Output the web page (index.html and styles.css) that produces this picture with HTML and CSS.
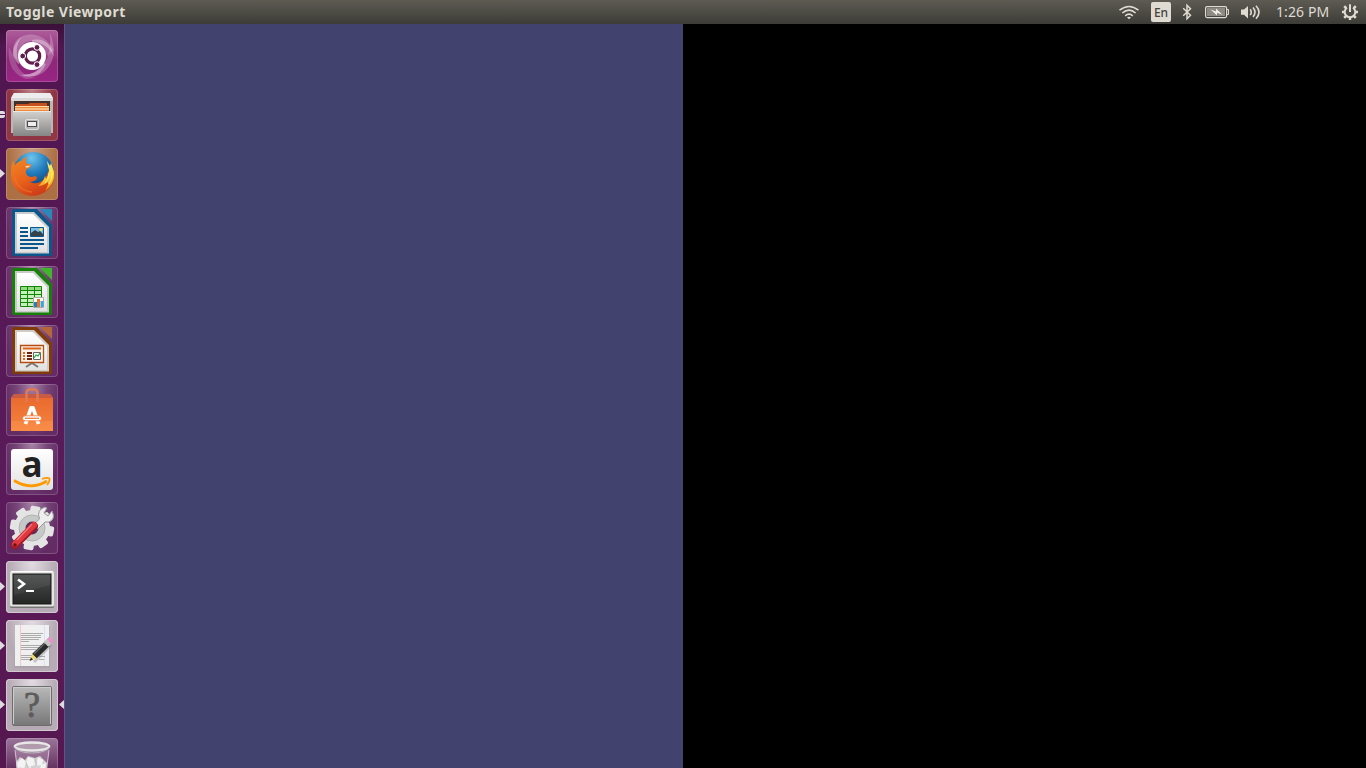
FILE: index.html
```html
<!DOCTYPE html>
<html lang="en">
<head>
<meta charset="utf-8">
<title>Toggle Viewport</title>
<link rel="stylesheet" href="styles.css">
</head>
<body>
<svg class="defs" width="0" height="0" aria-hidden="true">
  <defs>
    <linearGradient id="metal" x2="0" y2="1"><stop offset="0" stop-color="#d4d2d0"/><stop offset="1" stop-color="#858585"/></linearGradient>
    <linearGradient id="paper" x2="0" y2="1"><stop offset="0" stop-color="#fff"/><stop offset="1" stop-color="#e2e2e2"/></linearGradient>
    <linearGradient id="orange" x2="0" y2="1"><stop offset="0" stop-color="#e8672c"/><stop offset="1" stop-color="#f5853f"/></linearGradient>
    <radialGradient id="globe" cx=".45" cy=".15" r=".8"><stop offset="0" stop-color="#6cc5ee"/><stop offset=".5" stop-color="#1f78b8"/><stop offset="1" stop-color="#0c3a70"/></radialGradient>
    <linearGradient id="fox" x2=".5" y2="1"><stop offset="0" stop-color="#f28a22"/><stop offset=".6" stop-color="#e8621d"/><stop offset="1" stop-color="#cf3f17"/></linearGradient>
    <linearGradient id="tail" x2="0" y2="1"><stop offset="0" stop-color="#fff08a"/><stop offset=".5" stop-color="#ffd62e"/><stop offset="1" stop-color="#f08a1e"/></linearGradient>
    <linearGradient id="screen" x2="0" y2="1"><stop offset="0" stop-color="#4c4e4d"/><stop offset="1" stop-color="#252626"/></linearGradient>
    <linearGradient id="blank" x2="0" y2="1"><stop offset="0" stop-color="#b9b9b9"/><stop offset="1" stop-color="#777"/></linearGradient>
    <path id="arm" d="M26 10Q44 7 48 27Q42 13 26 12Z"/>
  </defs>
</svg>
<header class="panel">
  <span class="title">Toggle Viewport</span>
  <div class="indicators">
    <svg class="wifi" width="22" height="24" viewBox="0 0 22 24" fill="none" stroke="#dfdbd2"><path d="M1.500 10.200Q11 2.800 20.500 10.200" stroke-width="1.500"/><path d="M4.300 13Q11 7.400 17.700 13M7.200 15.800Q11 12.400 14.800 15.800" stroke-width="1.600"/><path d="M9 17.500Q11 15.900 13 17.500L11 19.300Z" fill="#dfdbd2" stroke="none"/></svg>
    <span class="lang">En</span>
    <svg class="bt" width="10" height="24" viewBox="0 0 10 24" fill="none" stroke="#dfdbd2" stroke-width="1.500"><path d="M1.200 8.200L8.500 15.200L5 18.700V5.300L8.500 8.800L1.200 15.800"/></svg>
    <svg class="bat" width="25" height="24" viewBox="0 0 25 24"><rect x=".6" y="6.600" width="21" height="11" rx="1.500" fill="none" stroke="#dfdbd2" stroke-width="1.200"/><rect x="2" y="8" width="18" height="8" fill="#8c8a82"/><path d="M22 9.500h1.500v5H22" fill="none" stroke="#dfdbd2"/><path d="M5.500 9.500L11 11.500L11 8.500L17.500 14.800L12 12.800L12 15.500Z" fill="#f2eee5"/></svg>
    <svg class="vol" width="21" height="24" viewBox="0 0 21 24"><path d="M1 9.500h3l4-3.500v12.500l-4-3.700H1Z" fill="#dfdbd2"/><path d="M10.200 9.300Q12.300 12.200 10.200 15.100M13 7.500Q17 12.200 13 17M16 5.800Q22 12.200 16 18.700" fill="none" stroke="#dfdbd2" stroke-width="1.600"/></svg>
    <span class="time">1:26 PM</span>
    <svg class="gear" width="18" height="24" viewBox="0 0 18 24" fill="none" stroke="#dfdbd2"><path d="M6 7.600A5.300 5.300 0 1 0 12 7.600" stroke-width="2"/><path d="M9 4.300V12" stroke-width="2"/><path d="M1 12h3M14 12h3M9 17v3M3.200 6.200l2 2M14.800 6.200l-2 2M3.200 17.800l2.300-2.300M14.800 17.800l-2.300-2.300" stroke-width="2.500"/></svg>
  </div>
</header>
<main class="desktop">
  <nav class="launcher">
    <div class="tile dash"><svg viewBox="0 0 52 52"><path d="M7 26Q5 9 20 5Q37 2 48 20L41 26Q37 11 26 11Q13 11 11 30Z" fill="#fff" opacity=".22"/><path d="M44 3Q54 28 38 42Q27 50 14 45Q30 46 38 34Q46 22 44 3Z" fill="#fff" opacity=".25"/><path d="M3 17Q0 42 20 49L30 48Q12 45 9 29Z" fill="#fff" opacity=".18"/><g fill="#fff" opacity=".35"><use href="#arm"/><use href="#arm" transform="rotate(120 26 26)"/><use href="#arm" transform="rotate(240 26 26)"/></g><circle cx="26" cy="26" r="14" fill="#fff"/><circle cx="26.500" cy="26" r="7.200" fill="none" stroke="#611d4d" stroke-width="3.200"/><g fill="#611d4d" stroke="#fff"><circle cx="16.700" cy="26" r="2.900"/><circle cx="31" cy="17.400" r="2.900"/><circle cx="31" cy="34.600" r="2.900"/></g></svg></div>
    <div class="tile files"><i class="pip double"></i><svg viewBox="0 0 52 52"><path d="M8 4H44L47 9V44H5V9Z" fill="#b9b8b7"/><path d="M8 4H44L47 9H5Z" fill="#ededed"/><path d="M5 9H47V12H5Z" fill="#d9d9d9"/><path d="M8 12H44V24H8Z" fill="#44302a"/><path d="M10 15H22L24 14H41V23H10Z" fill="#c74f20"/><path d="M9 17H43V23H9Z" fill="#ef8a3b"/><path d="M9 17.500H43" stroke="#ffe0a8" stroke-width="1"/><path d="M9 20H43" stroke="#fff1cf" stroke-width="1"/><path d="M7 22H45V47H7Z" fill="url(#metal)"/><path d="M7 22.500H45" stroke="#e8e8e8"/><rect x="19.500" y="30.500" width="13" height="10" rx="1.500" fill="#b5b5b5" stroke="#dedede"/><rect x="21.500" y="32.500" width="9" height="5" fill="#eee" stroke="#4c4c4c"/></svg></div>
    <div class="tile firefox"><i class="pip"></i><svg viewBox="0 0 52 52"><circle cx="27.500" cy="24" r="20" fill="url(#globe)"/><path d="M5 23Q5 17 7 13L9 17Q12 13 16 12.500Q17 9.500 21 9Q19 12 20 15Q22 16 25 16.500Q26 19 22 20.500Q19 22 20 25Q21 29 26 29L30 28L31 31Q28 34 24 34Q30 37 36 33Q40 30 42 24L47 21Q51 42 31 47.500Q15 50 8 38Q4 31 5 23Z" fill="url(#fox)"/><path d="M41 13L44 18L45 15L48 24Q49 36 39 43Q43 36 42 34Q37 38 32 38Q38 33 39 28L40 31Q43 27 43 22Q42 19 41 13Z" fill="url(#tail)"/><path d="M43 25Q43 31 39 35M46 25Q46 32 43 36" fill="none" stroke="#fff3a1" stroke-width=".8"/><path d="M19 18L25 17.500L21 20Z" fill="#f8d8aa"/><path d="M8 27Q10 42 26 44" fill="none" stroke="#f4782a" stroke-width="1.500" opacity=".6"/></svg></div>
    <div class="tile"><svg viewBox="0 0 52 52"><path d="M8 2H31L46 18V47Q46 49 44 49H8Q6 49 6 47V4Q6 2 8 2Z" fill="#0b568a"/><path d="M9 5H28L43 20V46.500H9Z" fill="#c7cbce"/><path d="M11 7H27L41 21V45H11Z" fill="url(#paper)"/><path d="M34 2H46V14Z" fill="#2988b8"/><path d="M14 21h8M14 25h8M14 29h8M14 33h24M14 37h24M14 41h18" stroke="#0b568a" stroke-width="2"/><path d="M24.500 20.500h13v9h-13Z" fill="#79bfe6" stroke="#0b568a"/><path d="M25 29V26L29 23L32 25L34 24L37 27V29Z" fill="#34434a"/><circle cx="35" cy="22.500" r="1.500" fill="#ffe15a"/></svg></div>
    <div class="tile"><svg viewBox="0 0 52 52"><path d="M8 2H31L46 18V47Q46 49 44 49H8Q6 49 6 47V4Q6 2 8 2Z" fill="#16800b"/><path d="M9 5H28L43 20V46.500H9Z" fill="#c7cbc5"/><path d="M11 7H27L41 21V45H11Z" fill="url(#paper)"/><path d="M34 2H46V14Z" fill="#3fb72b"/><path d="M14.500 20.500h21v20h-21Z" fill="#c6f0b9"/><path d="M15 21h20v3H15Z" fill="#91dd80"/><path d="M14.500 20.500h21v20h-21ZM14.500 24.500h21M14.500 28.500h21M14.500 32.500h21M14.500 36.500h21M21.500 20v20M28.500 20v20" fill="none" stroke="#148309"/><path d="M27.500 31.500h10v10h-10Z" fill="#fff" stroke="#aaa"/><path d="M28 36h3v5h-3Z" fill="#1f7fc3"/><path d="M31 33h3v8h-3Z" fill="#ed711f"/><path d="M34.500 35h3v6h-3Z" fill="#38a6dc"/></svg></div>
    <div class="tile"><svg viewBox="0 0 52 52"><path d="M8 2H31L46 18V47Q46 49 44 49H8Q6 49 6 47V4Q6 2 8 2Z" fill="#813b0a"/><path d="M9 5H28L43 20V46.500H9Z" fill="#d1cbc6"/><path d="M11 7H27L41 21V45H11Z" fill="url(#paper)"/><path d="M34 2H46V14Z" fill="#b7663a"/><path d="M26 38L20 42M26 38L32 42" stroke="#777" stroke-width="2"/><path d="M14.500 20.500h23v17h-23Z" fill="#fff2e7" stroke="#b64c10" stroke-width="1.300"/><path d="M17 23.500h18" stroke="#d8641e" stroke-width="2"/><path d="M17 28h2M17 31h2M17 34h2" stroke="#e46824" stroke-width="2"/><path d="M21 28h5M21 31h5M21 34h5" stroke="#6d260d" stroke-width="2"/><path d="M27.500 27.500h7v7h-7Z" fill="#fff" stroke="#666"/><path d="M28 33l2-3 2 1 2-3" fill="none" stroke="#25ad36" stroke-width="1.300"/></svg></div>
    <div class="tile"><svg viewBox="0 0 52 52"><path d="M5 14L8 10H44L47 14V47H5Z" fill="url(#orange)"/><path d="M5 14L8 10H44L47 14Z" fill="#c85c42"/><path d="M5 37H47V47H5Z" fill="#ff9a55" opacity=".35"/><path d="M20.500 18V9Q20.500 5.500 24 5.500H28Q31.500 5.500 31.500 9V18" fill="none" stroke="#df7957" stroke-width="2.500"/><path d="M19.500 40L25 24H27L32.500 40" fill="none" stroke="#fff" stroke-width="3.800" stroke-linejoin="round"/><rect x="16.500" y="31.800" width="19" height="5" rx="2.500" fill="#fff" stroke="#ef7637" stroke-width=".8"/><path d="M19 34.300h14" stroke="#ef7637" stroke-width="1.200"/></svg></div>
    <div class="tile"><svg viewBox="0 0 52 52"><rect x="5" y="6" width="42" height="41" rx="3" fill="url(#paper)"/><text x="26" y="34" class="letter">a</text><path d="M8 37.500Q25 48 41 38" fill="none" stroke="#ff9900" stroke-width="2.700"/><path d="M36 36Q41 34 43.500 35.500Q44 38 41 42" fill="none" stroke="#ff9900" stroke-width="1.800"/></svg></div>
    <div class="tile"><svg viewBox="0 0 52 52"><g fill="#e4e4e4" transform="rotate(10 26 26)"><circle cx="26" cy="26" r="18"/><rect x="21" y="4" width="10" height="44" rx="2"/><rect x="21" y="4" width="10" height="44" rx="2" transform="rotate(45 26 26)"/><rect x="21" y="4" width="10" height="44" rx="2" transform="rotate(90 26 26)"/><rect x="21" y="4" width="10" height="44" rx="2" transform="rotate(135 26 26)"/></g><circle cx="26" cy="26" r="13" fill="#c7c8c8" stroke="#b2b3b3"/><circle cx="26" cy="26" r="6.500" fill="#60305d"/><path d="M28 22L33.500 17Q30 8 39 5L41 6L38 11L42 14L46 9Q50 17 43 20L39 20L32 27Z" fill="#eee" stroke="#999"/><path d="M9 43L28 24" stroke="#a91721" stroke-width="8" stroke-linecap="round"/><path d="M9 42L28 23" stroke="#de3840" stroke-width="6" stroke-linecap="round"/><path d="M11 38L26 22" stroke="#f4777b" stroke-width="1.200"/><circle cx="9" cy="43" r="1.800" fill="#69151c"/></svg></div>
    <div class="tile light"><i class="pip"></i><svg viewBox="0 0 52 52"><rect x="4" y="10" width="44" height="37" rx="1.500" fill="#777"/><rect x="4" y="10" width="44" height="35.500" rx="1.500" fill="#e4e4e2"/><path d="M5 10.500h42" stroke="#fff"/><rect x="7" y="13" width="38" height="30" fill="url(#screen)" stroke="#151515"/><path d="M8 14H44V24L8 34Z" fill="#fff" opacity=".06"/><path d="M12 18.500L18 23L12 27.500" fill="none" stroke="#fff" stroke-width="2.500"/><path d="M20 30h8" stroke="#fff" stroke-width="2"/></svg></div>
    <div class="tile light"><i class="pip"></i><svg viewBox="0 0 52 52"><path d="M10 6H44V48H8Z" fill="#999" opacity=".35"/><path d="M9 5H43V46H9Z" fill="#f0f0f0"/><path d="M14.500 5V46" stroke="#f4c9c9"/><path d="M38.500 5V46" stroke="#d5e2f2"/><g stroke="#999" stroke-width=".8"><path d="M15 13.500h22M15 15.500h20M15 17.500h20M15 19.500h18M15 21.500h8M15 25.500h20M15 27.500h18M15 29.500h15M15 35.500h13M15 37.500h10M15 39.500h9M33 36.500h6M33 39.500h5"/></g><path d="M28 42L45 25" stroke="#777" stroke-width="3" opacity=".35"/><path d="M23.500 41L26.500 33L31 38Z" fill="#efda72"/><path d="M23.500 41l1.500-3.500 2 2Z" fill="#222"/><path d="M28.500 36L41 24" stroke="#292b2b" stroke-width="6.500"/><path d="M28 34L40 22" stroke="#686b6b" stroke-width="1.300"/><path d="M40 24.500L43 21.500" stroke="#c4c4c4" stroke-width="6.500"/><path d="M43 21.500L45.500 19" stroke="#e893c8" stroke-width="6.500"/></svg></div>
    <div class="tile light"><i class="pip"></i><i class="pip active"></i><svg viewBox="0 0 52 52"><rect x="6.500" y="7.500" width="39" height="39" rx="1.500" fill="url(#blank)" stroke="#6d6d6d"/><path d="M7.500 45V8.500H44.500V45" fill="none" stroke="#ccc"/><text x="26" y="38" class="question">?</text></svg></div>
    <div class="tile trash"><svg viewBox="0 0 52 52"><path d="M9 10L14 52H38L43 10Z" fill="#cbaec9" opacity=".35"/><path d="M9 12L14 52M43 12L38 52" stroke="#d6c1d4"/><path d="M10 24L14 19L19 22L22 18L29 20L34 18L37 21L41 25L39 52H12Z" fill="#d2d2d2"/><path d="M11 25L16 20L20 24L18 31L12 30ZM22 19L28 21L29 27L23 29L20 25ZM32 19L37 22L36 27L30 28ZM35 27L40 25L39 32L34 31ZM17 31l8-2 4 10-11 4Z" fill="#f3f3f3"/><path d="M20 24l2 6M29 21l2 7M13 30l8 1M25 30l10 2" stroke="#b9b9b9" stroke-width=".8"/><ellipse cx="26" cy="8.500" rx="17.200" ry="4" fill="#b19cae" stroke="#e8e8e8" stroke-width="2.400"/><path d="M8 9Q13 15 26 15Q39 15 44 9" fill="none" stroke="#bbb" stroke-width="1"/></svg></div>
  </nav>
  <section class="viewport"></section>
</main>
</body>
</html>
```
FILE: styles.css
```css
* { box-sizing: border-box; }
body { margin: 0; width: 1366px; height: 768px; display: flex; flex-direction: column; overflow: hidden; background: #000; font-family: "Noto Sans", "Open Sans", sans-serif; }
svg { display: block; flex: none; }
.defs { position: absolute; }
.panel { flex: none; height: 24px; padding: 0 7px 0 6px; display: flex; align-items: center; justify-content: space-between; background: linear-gradient(#5d5b52, #3d3c37); color: #dfdbd2; }
.title { font-size: 14px; font-weight: 700; line-height: 24px; letter-spacing: .45px; white-space: nowrap; }
.indicators { display: flex; align-items: center; }
.lang { width: 20px; height: 20px; margin-left: 11px; border-radius: 2px; background: #dfdbd2; color: #45433e; font: 500 12px/21px "Noto Sans", sans-serif; text-align: center; }
.bt { margin-left: 11px; }
.bat { margin-left: 13px; }
.vol { margin-left: 10px; }
.time { width: 54px; margin-left: 15px; font-size: 14px; letter-spacing: .1px; line-height: 24px; white-space: nowrap; }
.gear { margin-left: 11px; }
.desktop { flex: 1; min-height: 0; display: flex; }
.launcher { flex: none; width: 65px; padding: 6px 0 0 6px; display: flex; flex-direction: column; gap: 7px; overflow: hidden; background: linear-gradient(#3a1039, #501650 24px, #5b1b5b 65%, #55174f); border-right: 1px solid #625381; }
.tile { position: relative; flex: none; width: 52px; height: 52px; border-radius: 4px; background: radial-gradient(ellipse at 50% 0, #a782a6 0, #764578 42%, #632c65 75%); box-shadow: inset 0 0 0 1px #ffffff2e; }
.tile svg { width: 52px; height: 52px; overflow: visible; }
.dash { background: linear-gradient(#ad5c9a, #8d2779 60%, #9a2484); }
.files { background: radial-gradient(ellipse at 50% 0, #bd8086, #8e3545 60%, #923744); }
.firefox { background: radial-gradient(ellipse at 50% 0, #c99e84, #ad7044 65%); }
.light { background: radial-gradient(ellipse at 50% 0, #e3dce2, #b6aab5 65%, #b9aeb8); box-shadow: inset 0 0 0 1px #d2c9d1; }
.trash { background: linear-gradient(#9b759b, #64305f 60%); }
.pip { position: absolute; left: -6px; top: 21px; width: 5px; height: 9px; background: #dfdcdf; clip-path: polygon(0 0, 100% 50%, 0 100%); }
.double { top: 22px; height: 7px; clip-path: none; border-radius: 0 2px 2px 0; background: linear-gradient(#dfdcdf 3px, transparent 3px 4px, #dfdcdf 4px); }
.active { left: 53px; clip-path: polygon(100% 0, 0 50%, 100% 100%); }
.letter { font: 700 35px "Open Sans", sans-serif; text-anchor: middle; fill: #222; }
.question { font: 400 36px "Liberation Serif", serif; text-anchor: middle; fill: #5c5c5c; stroke: #5c5c5c; stroke-width: .8px; }
.viewport { width: 618px; background: #42426f; }
```
